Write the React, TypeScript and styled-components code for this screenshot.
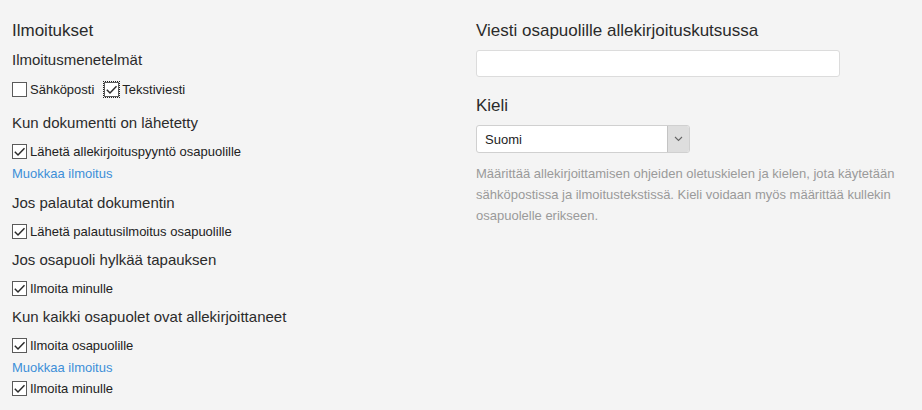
import React from "react";
import styled, { createGlobalStyle } from "styled-components";

const GlobalStyle = createGlobalStyle`
  html, body {
    margin: 0;
    padding: 0;
    background-color: #f4f4f4;
    font-family: "Liberation Sans", Arial, sans-serif;
    color: #333;
  }
`;

const Page = styled.div`
  display: grid;
  grid-template-columns: 464px 1fr;
  padding: 19px 12px 0 12px;
  width: 922px;
  height: 410px;
  box-sizing: border-box;
  overflow: hidden;
`;

const Column = styled.div`
  display: flex;
  flex-direction: column;
`;

const Title = styled.h2`
  font-size: 17px;
  font-weight: 400;
  line-height: 24px;
  margin: 0;
  color: #2b2b2b;
`;

const Section = styled.div<{ $gap?: number }>`
  display: flex;
  flex-direction: column;
  margin-top: ${(p) => p.$gap ?? 9}px;
`;

const SubTitle = styled.h3`
  font-size: 15px;
  font-weight: 400;
  line-height: 20px;
  margin: 0 0 8px 0;
  color: #2b2b2b;
`;

const CheckRow = styled.div<{ $gap?: number }>`
  display: flex;
  align-items: center;
  gap: 10px;
  height: 20px;
  margin-top: ${(p) => p.$gap ?? 0}px;
`;

const CheckItem = styled.label`
  display: inline-flex;
  align-items: center;
  gap: 3px;
  font-size: 13px;
  color: #222;
  cursor: pointer;
`;

const Box = styled.span<{ $focused?: boolean }>`
  width: 15px;
  height: 15px;
  box-sizing: border-box;
  border: 1px solid #5a5a5a;
  background: #fff;
  display: inline-flex;
  align-items: center;
  justify-content: center;
  outline: ${(p) => (p.$focused ? "1px dotted #222" : "none")};
  outline-offset: 0px;
`;

const EditLink = styled.a<{ $gap?: number }>`
  font-size: 13px;
  line-height: 18px;
  color: #3d8fd8;
  text-decoration: none;
  margin-top: ${(p) => p.$gap ?? 4}px;
  width: fit-content;
  cursor: pointer;
`;

const FieldLabel = styled.h2<{ $gap?: number }>`
  font-size: 17px;
  font-weight: 400;
  line-height: 24px;
  margin: ${(p) => p.$gap ?? 0}px 0 7px 0;
  color: #2b2b2b;
`;

const TextInput = styled.input`
  width: 364px;
  height: 27px;
  box-sizing: border-box;
  border: 1px solid #dcdcdc;
  border-radius: 3px;
  background: #fff;
  padding: 0 8px;
  font-family: inherit;
  font-size: 13px;
  outline: none;
`;

const SelectWrap = styled.div`
  display: flex;
  width: 214px;
  height: 28px;
  box-sizing: border-box;
  border: 1px solid #d0d0d0;
  border-radius: 3px;
  background: #fff;
  overflow: hidden;
`;

const SelectValue = styled.div`
  flex: 1;
  display: flex;
  align-items: center;
  padding-left: 8px;
  font-size: 13px;
  color: #222;
`;

const SelectArrow = styled.div`
  width: 21px;
  display: flex;
  align-items: center;
  justify-content: center;
  background: #dedede;
  border-left: 1px solid #c4c4c4;
`;

const HelpText = styled.p`
  margin: 10px 0 0 0;
  width: 440px;
  font-size: 13px;
  line-height: 21px;
  color: #9a9a9a;
`;

const Check = ({
  label,
  checked,
  focused,
}: {
  label: string;
  checked?: boolean;
  focused?: boolean;
}) => (
  <CheckItem>
    <Box $focused={focused}>
      {checked && (
        <svg width="13" height="13" viewBox="0 0 13 13">
          <path d="M1.8 6.8 L5 10 L11.5 3.2" fill="none" stroke="#2a2a2a" strokeWidth="1.5" />
        </svg>
      )}
    </Box>
    {label}
  </CheckItem>
);

export default function App() {
  return (
    <>
      <GlobalStyle />
      <Page>
        <Column>
          <Title>Ilmoitukset</Title>
          <Section $gap={7}>
            <SubTitle>Ilmoitusmenetelmät</SubTitle>
            <CheckRow $gap={1}>
              <Check label="Sähköposti" />
              <Check label="Tekstiviesti" checked focused />
            </CheckRow>
          </Section>
          <Section $gap={14}>
            <SubTitle>Kun dokumentti on lähetetty</SubTitle>
            <CheckRow>
              <Check label="Lähetä allekirjoituspyyntö osapuolille" checked />
            </CheckRow>
            <EditLink>Muokkaa ilmoitus</EditLink>
          </Section>
          <Section $gap={10}>
            <SubTitle>Jos palautat dokumentin</SubTitle>
            <CheckRow>
              <Check label="Lähetä palautusilmoitus osapuolille" checked />
            </CheckRow>
          </Section>
          <Section>
            <SubTitle>Jos osapuoli hylkää tapauksen</SubTitle>
            <CheckRow>
              <Check label="Ilmoita minulle" checked />
            </CheckRow>
          </Section>
          <Section>
            <SubTitle>Kun kaikki osapuolet ovat allekirjoittaneet</SubTitle>
            <CheckRow>
              <Check label="Ilmoita osapuolille" checked />
            </CheckRow>
            <EditLink>Muokkaa ilmoitus</EditLink>
            <CheckRow $gap={1}>
              <Check label="Ilmoita minulle" checked />
            </CheckRow>
          </Section>
        </Column>
        <Column>
          <FieldLabel>Viesti osapuolille allekirjoituskutsussa</FieldLabel>
          <TextInput type="text" />
          <FieldLabel $gap={17}>Kieli</FieldLabel>
          <SelectWrap>
            <SelectValue>Suomi</SelectValue>
            <SelectArrow>
              <svg width="9" height="6" viewBox="0 0 9 6">
                <path d="M1 1 L4.5 4.5 L8 1" fill="none" stroke="#666" strokeWidth="1.1" />
              </svg>
            </SelectArrow>
          </SelectWrap>
          <HelpText>
            Määrittää allekirjoittamisen ohjeiden oletuskielen ja kielen, jota käytetään
            sähköpostissa ja ilmoitustekstissä. Kieli voidaan myös määrittää kullekin
            osapuolelle erikseen.
          </HelpText>
        </Column>
      </Page>
    </>
  );
}
